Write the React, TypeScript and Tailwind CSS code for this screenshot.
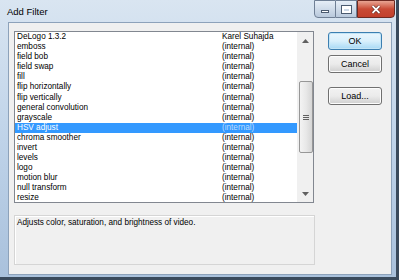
import React from "react";

const filters: [string, string][] = [
  ["DeLogo 1.3.2", "Karel Suhajda"],
  ["emboss", "(internal)"],
  ["field bob", "(internal)"],
  ["field swap", "(internal)"],
  ["fill", "(internal)"],
  ["flip horizontally", "(internal)"],
  ["flip vertically", "(internal)"],
  ["general convolution", "(internal)"],
  ["grayscale", "(internal)"],
  ["HSV adjust", "(internal)"],
  ["chroma smoother", "(internal)"],
  ["invert", "(internal)"],
  ["levels", "(internal)"],
  ["logo", "(internal)"],
  ["motion blur", "(internal)"],
  ["null transform", "(internal)"],
  ["resize", "(internal)"],
];

const selected = 9;

const WinButton = ({ label, primary }: { label: string; primary?: boolean }) => (
  <button
    className={`w-[54px] h-[18px] rounded-[3px] border text-[9px] leading-none text-black flex items-center justify-center ${
      primary
        ? "border-[#3c7fb1] bg-gradient-to-b from-[#eaf6fd] via-[#d9f0fc] to-[#a7d9f5] shadow-[inset_0_0_0_1px_#c4e5f6]"
        : "border-[#707070] bg-gradient-to-b from-[#f2f2f2] via-[#ebebeb] to-[#cfcfcf] shadow-[inset_0_0_0_1px_#fcfcfc]"
    }`}
  >
    {label}
  </button>
);

const ScrollBar = () => (
  <div className="w-[16px] h-full bg-[#f0f0f0] border-l border-[#f0f0f0] flex flex-col items-center">
    <div className="h-[17px] w-full flex items-center justify-center">
      <svg width="7" height="4" viewBox="0 0 7 4">
        <path d="M0 4 L3.5 0 L7 4 Z" fill="#606060" />
      </svg>
    </div>
    <div className="h-[32px]" />
    <div className="w-[14px] h-[72px] rounded-[2px] border border-[#979797] bg-gradient-to-r from-[#f3f3f3] via-[#e8e8e8] to-[#d6d6d6] flex items-center justify-center">
      <svg width="6" height="5" viewBox="0 0 6 5">
        <path d="M0 0.5 H6 M0 2.5 H6 M0 4.5 H6" stroke="#606060" strokeWidth="1" />
      </svg>
    </div>
    <div className="flex-1" />
    <div className="h-[17px] w-full flex items-center justify-center">
      <svg width="7" height="4" viewBox="0 0 7 4">
        <path d="M0 0 L3.5 4 L7 0 Z" fill="#606060" />
      </svg>
    </div>
  </div>
);

export default function App() {
  return (
    <div
      className="w-[399px] h-[280px] overflow-hidden flex flex-col bg-gradient-to-b from-[#d9e5f1] via-[#bfd3e9] to-[#a9c1dc] border-r-[3px] border-b-[3px] border-[#3a4a5c]"
      style={{ fontFamily: '"Liberation Sans", Arial, sans-serif' }}
    >
      {/* title bar */}
      <div className="h-[22px] flex items-start justify-between">
        <span className="pl-[7px] pt-[5px] text-[9.5px] text-black">Add Filter</span>
        <div className="flex mr-[1px]">
          <div className="w-[22px] h-[18px] rounded-bl-[4px] border border-[#6f7f95] bg-gradient-to-b from-[#e6eef7] to-[#b9c9dc] flex items-center justify-center">
            <div className="w-[8px] h-[3px] bg-white border border-[#4b5b70] mt-[5px]" />
          </div>
          <div className="w-[21px] h-[18px] border-y border-r border-[#6f7f95] bg-gradient-to-b from-[#e6eef7] to-[#b9c9dc] flex items-center justify-center">
            <div className="w-[9px] h-[7px] border-2 border-t-[3px] border-white outline outline-1 outline-[#4b5b70]" />
          </div>
          <div className="w-[38px] h-[18px] rounded-br-[4px] border border-[#6e2a22] bg-gradient-to-b from-[#e8a493] via-[#c94a35] to-[#c2402c] flex items-center justify-center">
            <svg width="10" height="9" viewBox="0 0 10 9">
              <path d="M1.5 1 L8.5 8 M8.5 1 L1.5 8" stroke="#4d1a12" strokeWidth="3" />
              <path d="M1.5 1 L8.5 8 M8.5 1 L1.5 8" stroke="#ffffff" strokeWidth="1.8" />
            </svg>
          </div>
        </div>
      </div>

      {/* client area */}
      <div className="ml-[8px] mr-[4px] h-[253px] bg-[#f0f0f0] border border-[#8da2ba] flex text-[8.2px] text-black">
        <div className="pl-[5px] pt-[8px] flex flex-col">
          <div className="w-[300px] h-[172px] bg-white border border-[#828790] flex">
            <div className="flex-1">
              {filters.map(([name, author], i) => (
                <div
                  key={name}
                  className={`h-[10.1px] flex items-center leading-none whitespace-nowrap ${
                    i === selected ? "bg-[#3399ff] text-white" : ""
                  }`}
                >
                  <span className="w-[207px] pl-[2px]">{name}</span>
                  <span className={i === selected ? "text-[#bcdcff]" : ""}>{author}</span>
                </div>
              ))}
            </div>
            <ScrollBar />
          </div>
          <div className="mt-[12px] w-[301px] h-[50px] border border-[#d5d5d5] shadow-[inset_1px_1px_0_#ffffff] bg-[#f0f0f0] pl-[2px] pt-[3px] leading-none">
            Adjusts color, saturation, and brightness of video.
          </div>
        </div>
        <div className="ml-[13px] pt-[9px] flex flex-col">
          <WinButton label="OK" primary />
          <div className="h-[5px]" />
          <WinButton label="Cancel" />
          <div className="h-[14px]" />
          <WinButton label="Load..." />
        </div>
      </div>
    </div>
  );
}
